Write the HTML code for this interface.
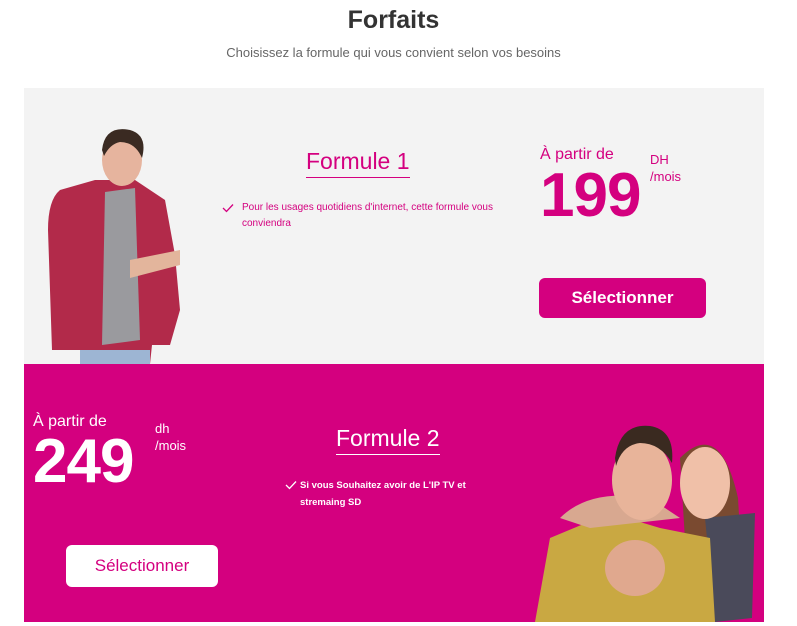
<!DOCTYPE html>
<html><head><meta charset="utf-8"><style>
*{margin:0;padding:0;box-sizing:border-box}
body{width:797px;height:626px;background:#fff;font-family:"Liberation Sans",sans-serif;position:relative;overflow:hidden}
.a{position:absolute}
.mg{color:#d4007f}
</style></head><body>
<div class="a" style="left:0;width:787px;top:6px;text-align:center;font-size:25px;font-weight:bold;color:#333">Forfaits</div>
<div class="a" style="left:0;width:787px;top:45px;text-align:center;font-size:13px;color:#666">Choisissez la formule qui vous convient selon vos besoins</div>

<div class="a" style="left:24px;top:88px;width:740px;height:276px;background:#f3f3f3"></div>
<svg class="a" style="left:40px;top:120px" width="150" height="244">
<path d="M55 60 L20 70 Q8 80 8 110 L12 230 L40 230 L40 244 L110 244 L112 225 L130 225 L140 190 L135 135 L125 80 L95 60 Z" fill="#b22a4a"/>
<path d="M65 72 L95 68 L100 220 L62 225 Z" fill="#9a9a9e"/>
<path d="M40 230 L110 230 L110 244 L40 244 Z" fill="#9db5d3"/>
<path d="M90 140 L140 130 L140 145 L90 158 Z" fill="#e3b59c"/>
<ellipse cx="82" cy="40" rx="20" ry="26" fill="#e6b49e"/>
<path d="M62 30 Q65 5 90 10 Q108 15 102 38 Q95 22 80 22 Q70 24 64 36 Z" fill="#3a2a22"/>
</svg>

<div class="a mg" style="left:306px;top:147px;font-size:23px;border-bottom:1.5px solid #d4007f;padding-bottom:2px;line-height:28px">Formule 1</div>
<svg class="a" style="left:222px;top:203px" width="12" height="10"><path d="M1 5 L4.5 8.5 L11 1.5" stroke="#d4007f" stroke-width="1.3" fill="none"/></svg>
<div class="a mg" style="left:242px;top:200px;width:280px;font-size:10px;line-height:16px">Pour les usages quotidiens d'internet, cette formule vous conviendra</div>
<div class="a mg" style="left:540px;top:146px;font-size:16px">À partir de</div>
<div class="a mg" style="left:540px;top:160px;font-size:62px;font-weight:bold;letter-spacing:-1px;line-height:72px">199</div>
<div class="a mg" style="left:650px;top:151px;font-size:13px;line-height:17px">DH<br>/mois</div>
<div class="a" style="left:539px;top:278px;width:167px;height:40px;background:#d4007f;border-radius:6px;color:#fff;font-size:17px;font-weight:bold;text-align:center;line-height:40px">Sélectionner</div>

<div class="a" style="left:24px;top:364px;width:740px;height:258px;background:#d4007f"></div>
<div class="a" style="left:33px;top:413px;font-size:16px;color:#fff">À partir de</div>
<div class="a" style="left:33px;top:426px;font-size:62px;font-weight:bold;letter-spacing:-1px;line-height:72px;color:#fff">249</div>
<div class="a" style="left:155px;top:420px;font-size:13px;line-height:17px;color:#fff">dh<br>/mois</div>
<div class="a" style="left:66px;top:545px;width:152px;height:42px;background:#fff;border-radius:6px;color:#d4007f;font-size:17px;text-align:center;line-height:42px">Sélectionner</div>
<div class="a" style="left:336px;top:424px;font-size:23px;color:#fff;border-bottom:1.5px solid #fff;padding-bottom:2px;line-height:28px">Formule 2</div>
<svg class="a" style="left:285px;top:480px" width="12" height="10"><path d="M1 5 L4.5 8.5 L11 1.5" stroke="#fff" stroke-width="1.3" fill="none"/></svg>
<div class="a" style="left:300px;top:477px;width:200px;font-size:9.5px;line-height:17px;color:#fff;font-weight:bold">Si vous Souhaitez avoir de L'IP TV et stremaing SD</div>
<svg class="a" style="left:530px;top:418px" width="234" height="204">
<path d="M150 40 Q190 0 208 80 L215 200 L160 204 Z" fill="#7a4a30"/>
<path d="M175 100 L225 95 L222 200 L185 204 Z" fill="#4a4a5a"/>
<ellipse cx="175" cy="65" rx="25" ry="36" fill="#f0c0a8"/>
<path d="M20 120 L80 95 L130 110 L180 120 L185 204 L5 204 Z" fill="#c9a842"/>
<path d="M30 100 Q60 70 120 80 L150 100 L60 110 Z" fill="#d8a890"/>
<ellipse cx="112" cy="62" rx="30" ry="40" fill="#e8b49a"/>
<path d="M85 40 Q90 5 120 8 Q145 12 142 45 Q130 25 110 25 Q92 27 86 48 Z" fill="#3a2a20"/>
<ellipse cx="105" cy="150" rx="30" ry="28" fill="#e0a88e"/>
</svg>
</body></html>
